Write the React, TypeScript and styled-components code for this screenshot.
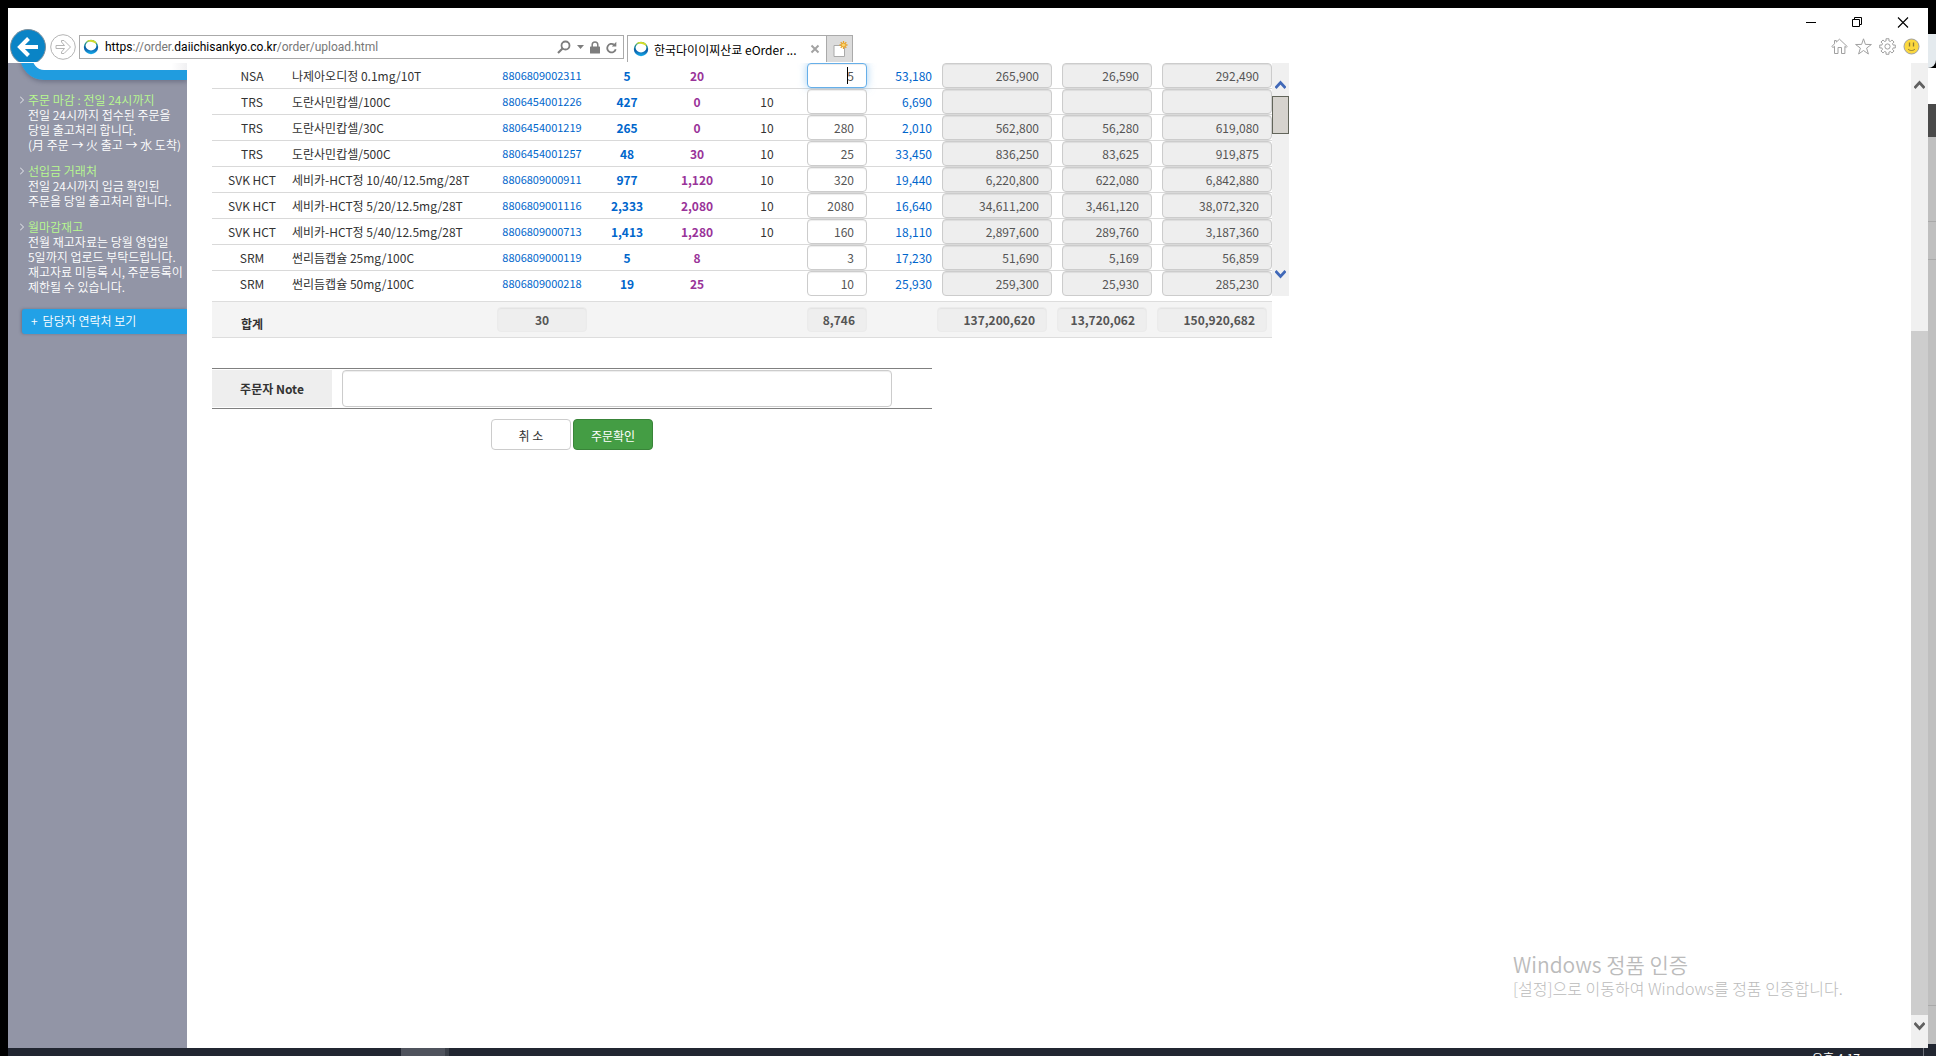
import React from "react";
import styled, { createGlobalStyle, css } from "styled-components";

const GlobalStyle = createGlobalStyle`
  *, *::before, *::after { box-sizing: border-box; }
  html, body, #root { height: 100%; }
  body {
    margin: 0;
    background: #000;
    color: #333;
    font-family: "Noto Sans CJK KR", "Noto Sans", sans-serif;
    font-size: 12px;
    overflow: hidden;
  }
  button, input { font: inherit; color: inherit; }
  button { padding: 0; border: 0; background: none; }
  svg { display: block; }
`;

/* ---------- desktop ---------- */

const Desktop = styled.div`
  height: 100vh;
  display: grid;
  grid-template-columns: 8px minmax(0, 1fr) 8px;
  grid-template-rows: 8px minmax(0, 1fr) 8px;
  background: #000;
`;

const Behind = styled.div`
  grid-column: 3;
  grid-row: 2 / 4;
  display: flex;
  flex-direction: column;
`;

const Slice = styled.div<{ $h?: number; $bg: string; $round?: boolean }>`
  ${(p) => (p.$h ? `flex: none; height: ${p.$h}px;` : "flex: 1;")}
  background: ${(p) => p.$bg};
  border-bottom-right-radius: ${(p) => (p.$round ? 8 : 0)}px;
`;

const Taskbar = styled.footer`
  grid-column: 2;
  grid-row: 3;
  display: flex;
  justify-content: space-between;
  overflow: hidden;
  background: #212631;
  color: #fff;
`;

const RunningApp = styled.div`
  width: 48px;
  margin-left: 393px;
  background: #4f535d;
  border-right: 4px solid #3a3f48;
`;

const Clock = styled.div`
  padding: 2px 63px 0 0;
  margin-right: 4px;
  border-right: 1px solid #6d717a;
  font-size: 12px;
  line-height: 16px;
`;

/* ---------- browser window ---------- */

const Window = styled.div`
  grid-column: 2;
  grid-row: 2;
  position: relative;
  display: flex;
  flex-direction: column;
  background: #fff;
`;

const Chrome = styled.header`
  flex: none;
  height: 55px;
  display: flex;
  justify-content: space-between;
`;

const NavGroup = styled.div`
  height: 34px;
  margin-top: 20px;
  padding-left: 2px;
  display: flex;
  align-items: flex-start;
  overflow: hidden;
`;

const BackButton = styled.button`
  margin-top: 1px;
  width: 36px;
  height: 36px;
`;

const ForwardButton = styled.button`
  margin: 6px 3px 0 4px;
  width: 26px;
  height: 26px;
`;

const AddressBar = styled.form`
  width: 545px;
  height: 24px;
  margin-top: 7px;
  padding: 0 6px 0 3px;
  display: flex;
  align-items: center;
  gap: 6px;
  border: 1px solid #aaa;
`;

const Url = styled.div`
  flex: 1;
  font-family: Roboto, "Noto Sans CJK KR", sans-serif;
  font-size: 12px;
  line-height: 20px;
  color: #777;
  white-space: nowrap;
  b { font-weight: 400; color: #000; }
`;

const TabStrip = styled.div`
  display: flex;
  height: 27px;
  margin: 7px 0 0 3px;
`;

const Tab = styled.div`
  width: 199px;
  padding: 0 4px 0 5px;
  display: flex;
  align-items: center;
  gap: 5px;
  border: solid #aaa;
  border-width: 1px 0 0 1px;
  font-size: 12px;
  color: #000;
  white-space: nowrap;
  span { flex: 1; }
`;

const NewTab = styled.button`
  width: 27px;
  display: grid;
  place-items: center;
  background: #dcdcdc;
  border: solid #aaa;
  border-width: 1px 1px 0 1px;
`;

const RightTools = styled.div`
  display: flex;
  flex-direction: column;
  align-items: flex-end;
`;

const ControlRow = styled.div`
  display: flex;
  align-items: flex-start;
  gap: 30px;
  padding: 6px 17px 0 0;
  height: 30px;
`;

const ToolRow = styled.div`
  display: flex;
  gap: 7px;
  padding-right: 8px;
`;

const Body = styled.div`
  flex: 1;
  min-height: 0;
  display: flex;
  overflow: hidden;
`;

const PageScroll = styled.div`
  flex: none;
  width: 17px;
  display: flex;
  flex-direction: column;
  align-items: center;
  background: #f0f0f0;
`;

const PageTrack = styled.div`
  flex: 1;
  width: 100%;
  display: flex;
  flex-direction: column;
  justify-content: flex-end;
`;

const PageThumb = styled.div`
  height: 74%;
  background: #cdcdcd;
`;

const ScrollButton = styled.button<{ $h: number; $drop: number }>`
  flex: none;
  display: flex;
  align-items: flex-start;
  justify-content: center;
  width: 17px;
  height: ${(p) => p.$h}px;
  padding-top: ${(p) => p.$drop}px;
`;

/* ---------- sidebar ---------- */

const Sidebar = styled.aside`
  flex: none;
  width: 179px;
  overflow: hidden;
  background: #9295a6;
  color: #fff;
`;

const PanelEdge = styled.div`
  height: 40px;
  margin: -23px 0 0 12px;
  border: solid #209cdf;
  border-width: 0 0 10px 12px;
  border-bottom-left-radius: 24px;
  background: linear-gradient(90deg, #fff 90%, #f0f0f2);
  box-shadow: 0 2px 4px rgba(60, 66, 90, 0.4);
`;

const Notices = styled.div`
  padding: 12px 0 0 12px;
  display: flex;
  flex-direction: column;
  gap: 11px;
`;

const Notice = styled.section`
  display: grid;
  grid-template-columns: 8px 1fr;
  align-items: center;
  line-height: 15px;
  white-space: nowrap;
  h2 {
    margin: 0;
    font-size: 12px;
    font-weight: 350;
    color: #b9fb8f;
  }
  p {
    grid-column: 2;
    margin: 0;
    font-weight: 350;
  }
`;

const ContactLink = styled.a`
  display: block;
  margin: 15px 0 0 14px;
  padding-left: 9px;
  height: 25px;
  line-height: 24px;
  border-radius: 3px 0 0 3px;
  background: #22a1e6;
  box-shadow: -1px 0 3px rgba(60, 66, 90, 0.4);
  color: #fff;
  font-weight: 350;
  text-decoration: none;
  span { margin-right: 5px; }
`;

/* ---------- order form ---------- */

const Main = styled.main`
  flex: 1;
  min-width: 0;
  padding-left: 25px;
`;

const Lines = styled.div`
  display: flex;
`;

const OrderTable = styled.table`
  width: 1060px;
  table-layout: fixed;
  border-collapse: separate;
  border-spacing: 0;
  td, th { padding: 0; }
`;

const Row = styled.tr`
  td { height: 26px; border-bottom: 1px solid #d9d9d9; line-height: 25px; }
  &:last-child td { height: 25px; border-bottom: 0; }
`;

type CellKind = "center" | "name" | "code" | "stock" | "avg" | "price" | "field" | "sum";

const kinds: Record<CellKind, ReturnType<typeof css>> = {
  center: css`text-align: center;`,
  name: css`text-align: left; white-space: nowrap;`,
  code: css`text-align: center; color: #0066cc; font-size: 11px;`,
  stock: css`text-align: center; color: #0066cc; font-weight: 700;`,
  avg: css`text-align: center; color: #993399; font-weight: 700;`,
  price: css`text-align: right; color: #0066cc;`,
  field: css`position: relative;`,
  sum: css``,
};

const Cell = styled.td<{ $kind: CellKind }>`
  ${(p) => kinds[p.$kind]}
  &&& { padding: ${(p) => (p.$kind === "sum" ? "0 0 0 10px" : p.$kind === "field" ? "0 5px" : "0")}; }
`;

const Field = styled.input<{ $active?: boolean }>`
  display: block;
  width: 100%;
  height: 25px;
  padding: 0 12px;
  text-align: right;
  color: #555;
  background: #fff;
  border: 1px solid ${(p) => (p.$active ? "#66afe9" : "#ccc")};
  border-radius: 4px;
  box-shadow: inset 0 1px 1px rgba(0, 0, 0, 0.075)
    ${(p) => (p.$active ? ", 0 0 8px rgba(102, 175, 233, 0.6)" : "")};
  &:read-only { background: #eee; }
`;

const Caret = styled.span`
  position: absolute;
  top: 4px;
  right: 24px;
  width: 1px;
  height: 17px;
  background: #000;
`;

const ListScroll = styled.div`
  width: 17px;
  display: flex;
  flex-direction: column;
  background: #f0f0f0;
`;

const ListThumb = styled.div`
  height: 38px;
  margin-bottom: auto;
  background: #d6d3ce;
  border: 1px solid #62655a;
`;

const TotalTable = styled(OrderTable)`
  margin-top: 5px;
  background: #f4f4f4;
  border: solid #ddd;
  border-width: 1px 0;
  td, th { height: 35px; padding: 0 5px; }
  th { padding-top: 8px; font-weight: 700; text-align: center; }
`;

const Total = styled.output<{ $center?: boolean }>`
  display: block;
  height: 25px;
  margin-bottom: 1px;
  padding: 0 11px;
  line-height: 24px;
  border: 1px solid #ebebeb;
  border-radius: 4px;
  background: #eee;
  box-shadow: inset 0 1px 1px rgba(0, 0, 0, 0.05);
  color: #555;
  font-weight: 700;
  text-align: ${(p) => (p.$center ? "center" : "right")};
`;

const OrderForm = styled.form`
  width: 720px;
  margin-top: 30px;
`;

const NoteRow = styled.div`
  display: flex;
  gap: 10px;
  padding: 1px 0;
  border: solid #808080;
  border-width: 1px 0;
  label {
    width: 120px;
    line-height: 37px;
    background: #eee;
    text-align: center;
    font-weight: 700;
  }
  input {
    width: 550px;
    height: 37px;
    padding: 0 12px;
    border: 1px solid #ccc;
    border-radius: 4px;
    box-shadow: inset 0 1px 1px rgba(0, 0, 0, 0.075);
  }
`;

const Actions = styled.div`
  display: flex;
  justify-content: center;
  gap: 2px;
  margin-top: 10px;
`;

const Action = styled.button<{ $primary?: boolean }>`
  width: 80px;
  height: 31px;
  padding-top: 1px;
  border: 1px solid ${(p) => (p.$primary ? "#398439" : "#ccc")};
  border-radius: 4px;
  background: ${(p) => (p.$primary ? "#449d44" : "#fff")};
  color: ${(p) => (p.$primary ? "#fff" : "#333")};
`;

const Activation = styled.div`
  position: absolute;
  right: 80px;
  bottom: 49px;
  width: 335px;
  color: #bbb;
  font-weight: 300;
  white-space: nowrap;
  strong { display: block; font-size: 21px; font-weight: 350; line-height: 26px; }
  span { display: block; font-size: 16px; line-height: 22px; }
`;

/* ---------- icons ---------- */

const SiteIcon = () => (
  <svg width="16" height="16" viewBox="0 0 16 16">
    <defs>
      <linearGradient id="ring" x1="0" y1="0" x2="0" y2="1">
        <stop offset="0" stopColor="#5fb84a" />
        <stop offset="0.35" stopColor="#0b7f9c" />
        <stop offset="0.6" stopColor="#0a5ca8" />
        <stop offset="1" stopColor="#17b0ee" />
      </linearGradient>
    </defs>
    <circle cx="8" cy="8" r="7.2" fill="url(#ring)" />
    <ellipse cx="8" cy="6.800" rx="5.4" ry="4.6" fill="#fff" />
    <path d="M3.500 2.400C6 .4 10.500 .4 13 2.900L13.400 5C10 2.600 7 2.300 3.500 2.400Z" fill="#d3dc2a" />
  </svg>
);

const BackIcon = () => (
  <svg width="36" height="36" viewBox="0 0 36 36">
    <circle cx="18" cy="18" r="17.500" fill="#0a84c6" stroke="#7c8f9c" />
    <path d="M28 18H10.500M18.500 9.500L10 18l8.500 8.500" fill="none" stroke="#fff" strokeWidth="4" />
  </svg>
);

const ForwardIcon = () => (
  <svg width="26" height="26" viewBox="0 0 26 26" fill="none" stroke="#b4b4b4">
    <circle cx="13" cy="13" r="12.300" />
    <path d="M6 11.500h8.500L11.500 8V6.500h2.500L20.500 13 14 19.500h-2.500V18l3-3.500H6z" />
  </svg>
);

const SearchIcon = () => (
  <svg width="14" height="14" viewBox="0 0 14 14" fill="none" stroke="#7d7d7d">
    <circle cx="8.500" cy="5.500" r="4" strokeWidth="1.800" />
    <path d="M5.500 8.500L1 13" strokeWidth="2.200" />
  </svg>
);

const DropIcon = () => (
  <svg width="7" height="4" viewBox="0 0 7 4"><path d="M0 0h7L3.500 4z" fill="#7d7d7d" /></svg>
);

const LockIcon = () => (
  <svg width="10" height="13" viewBox="0 0 10 13">
    <path d="M2.200 6V3.800a2.800 2.800 0 0 1 5.600 0V6" fill="none" stroke="#7d7d7d" strokeWidth="1.500" />
    <rect y="5.500" width="10" height="7" rx="0.600" fill="#7d7d7d" />
  </svg>
);

const ReloadIcon = () => (
  <svg width="11" height="13" viewBox="0 0 11 13">
    <path d="M9.700 8.300A4.300 4.300 0 1 1 8 3.600" fill="none" stroke="#7d7d7d" strokeWidth="1.800" />
    <path d="M5.800 5.500H10.300V.8z" fill="#7d7d7d" />
  </svg>
);

const CloseTabIcon = () => (
  <svg width="14" height="10" viewBox="0 0 14 10" stroke="#a3a3a3" strokeWidth="2">
    <path d="M3.500 1.500l7 7M10.500 1.500l-7 7" />
  </svg>
);

const NewTabIcon = () => (
  <svg width="16" height="17" viewBox="0 0 16 17">
    <path d="M2 4.500h10.500v11H2z" fill="#fff" stroke="#aaa" />
    <path d="M11.500 0v8M7.500 4h8M8.700 1.200l5.600 5.600M14.300 1.200L8.700 6.800" stroke="#e9a32a" strokeWidth="1.300" />
    <circle cx="11.500" cy="4" r="1.600" fill="#fcd66b" />
  </svg>
);

const MinimizeIcon = () => (
  <svg width="16" height="16" viewBox="0 0 16 16"><path d="M3 8.500h10" stroke="#000" /></svg>
);
const RestoreIcon = () => (
  <svg width="16" height="16" viewBox="0 0 16 16" fill="none" stroke="#000">
    <path d="M3.500 5.500h7v7h-7zM5.500 5.500v-2h7v7h-2" />
  </svg>
);
const CloseIcon = () => (
  <svg width="16" height="16" viewBox="0 0 16 16" stroke="#000" strokeWidth="1.100">
    <path d="M3 3.500l10 10M13 3.500l-10 10" />
  </svg>
);

const HomeIcon = () => (
  <svg width="17" height="17" viewBox="0 0 17 17" fill="none" stroke="#a0a0a0">
    <path d="M.8 8.500L3.500 5.800V2.500h1.800v1.600L8.500 1.200l7.700 7.300-1 1-1.300-1.200v7.200H10.500v-6h-3.500v6H3.500V8.300L2 9.500z" />
  </svg>
);
const StarIcon = () => (
  <svg width="17" height="17" viewBox="0 0 17 17" fill="none" stroke="#a0a0a0">
    <path d="M8.500 .8l1.900 5.600 6 .1-4.800 3.600 1.800 5.900-4.900-3.500-4.900 3.500 1.800-5.900L.6 6.500l6-.1z" />
  </svg>
);
const GearIcon = () => {
  const teeth = Array.from({ length: 8 }, (_, i) => {
    const at = (r: number, d: number) => {
      const a = ((i * 45 + d) * Math.PI) / 180;
      return `${(8.5 + r * Math.cos(a)).toFixed(2)} ${(8.5 + r * Math.sin(a)).toFixed(2)}`;
    };
    return `${at(5.8, -14)}L${at(7.9, -11)}L${at(7.9, 11)}L${at(5.8, 14)}`;
  });
  return (
    <svg width="17" height="17" viewBox="0 0 17 17" fill="none" stroke="#a0a0a0">
      <path d={`M${teeth.join("L")}Z`} />
      <circle cx="8.500" cy="8.500" r="2.600" />
    </svg>
  );
};
const SmileIcon = () => (
  <svg width="17" height="17" viewBox="0 0 17 17">
    <circle cx="8.500" cy="8.500" r="7.500" fill="#fbd83f" stroke="#a0a0a0" />
    <path d="M6.500 4.500v4M10.500 4.500v4" stroke="#8a7836" strokeWidth="1.300" />
    <path d="M5 11c1.800 2 5.200 2 7 0" fill="none" stroke="#8a7836" />
  </svg>
);

const Chevron = ({ down, color }: { down?: boolean; color: string }) => (
  <svg width="11" height="9" viewBox="0 0 11 9" fill="none" stroke={color} strokeWidth="2.800">
    <path d={down ? "M.5 1l5 5.500 5-5.500" : "M.5 8l5-5.500 5 5.500"} />
  </svg>
);

const Bullet = () => (
  <svg width="4" height="8" viewBox="0 0 4 8" fill="none" stroke="#e8e9ee">
    <path d="M0 .5l3.500 3.500L0 7.500" />
  </svg>
);

/* ---------- data ---------- */

type Line = [string, string, string, string, string, string, string, string, string, string, string];

const lines: Line[] = [
  ["NSA", "나제아오디정 0.1mg/10T", "8806809002311", "5", "20", "", "5", "53,180", "265,900", "26,590", "292,490"],
  ["TRS", "도란사민캅셀/100C", "8806454001226", "427", "0", "10", "", "6,690", "", "", ""],
  ["TRS", "도란사민캅셀/30C", "8806454001219", "265", "0", "10", "280", "2,010", "562,800", "56,280", "619,080"],
  ["TRS", "도란사민캅셀/500C", "8806454001257", "48", "30", "10", "25", "33,450", "836,250", "83,625", "919,875"],
  ["SVK HCT", "세비카-HCT정 10/40/12.5mg/28T", "8806809000911", "977", "1,120", "10", "320", "19,440", "6,220,800", "622,080", "6,842,880"],
  ["SVK HCT", "세비카-HCT정 5/20/12.5mg/28T", "8806809001116", "2,333", "2,080", "10", "2080", "16,640", "34,611,200", "3,461,120", "38,072,320"],
  ["SVK HCT", "세비카-HCT정 5/40/12.5mg/28T", "8806809000713", "1,413", "1,280", "10", "160", "18,110", "2,897,600", "289,760", "3,187,360"],
  ["SRM", "썬리듬캡슐 25mg/100C", "8806809000119", "5", "8", "", "3", "17,230", "51,690", "5,169", "56,859"],
  ["SRM", "썬리듬캡슐 50mg/100C", "8806809000218", "19", "25", "", "10", "25,930", "259,300", "25,930", "285,230"],
];

const cellKinds: CellKind[] = [
  "center", "name", "code", "stock", "avg", "center", "field", "price", "sum", "sum", "sum",
];

const notices = [
  { title: "주문 마감 : 전일 24시까지", body: ["전일 24시까지 접수된 주문을", "당일 출고처리 합니다.", "(月 주문 → 火 출고 → 水 도착)"] },
  { title: "선입금 거래처", body: ["전일 24시까지 입금 확인된", "주문을 당일 출고처리 합니다."] },
  { title: "월마감재고", body: ["전월 재고자료는 당월 영업일", "5일까지 업로드 부탁드립니다.", "재고자료 미등록 시, 주문등록이", "제한될 수 있습니다."] },
];

const Columns = () => (
  <colgroup>
    {[80, 200, 100, 70, 70, 70, 70, 60, 120, 100, 120].map((w, i) => (
      <col key={i} width={w} />
    ))}
  </colgroup>
);

const LineRow = ({ line, active }: { line: Line; active: boolean }) => (
  <Row>
    {line.map((value, i) => {
      const kind = cellKinds[i];
      return (
        <Cell key={i} $kind={kind}>
          {kind === "field" ? (
            <>
              <Field aria-label={line[1]} defaultValue={value} $active={active} />
              {active && <Caret />}
            </>
          ) : kind === "sum" ? (
            <Field aria-label={line[1]} defaultValue={value} readOnly />
          ) : (
            value
          )}
        </Cell>
      );
    })}
  </Row>
);

export default function App() {
  return (
    <Desktop>
      <GlobalStyle />
      <Window>
        <Chrome>
          <NavGroup>
            <BackButton aria-label="뒤로"><BackIcon /></BackButton>
            <ForwardButton aria-label="앞으로"><ForwardIcon /></ForwardButton>
            <AddressBar>
              <SiteIcon />
              <Url><b>https</b>://order.<b>daiichisankyo.co.kr</b>/order/upload.html</Url>
              <SearchIcon />
              <DropIcon />
              <LockIcon />
              <ReloadIcon />
            </AddressBar>
            <TabStrip>
              <Tab>
                <SiteIcon />
                <span>한국다이이찌산쿄 eOrder ...</span>
                <button aria-label="탭 닫기"><CloseTabIcon /></button>
              </Tab>
              <NewTab aria-label="새 탭"><NewTabIcon /></NewTab>
            </TabStrip>
          </NavGroup>
          <RightTools>
            <ControlRow>
              <button aria-label="최소화"><MinimizeIcon /></button>
              <button aria-label="이전 크기로"><RestoreIcon /></button>
              <button aria-label="닫기"><CloseIcon /></button>
            </ControlRow>
            <ToolRow>
              <button aria-label="홈"><HomeIcon /></button>
              <button aria-label="즐겨찾기"><StarIcon /></button>
              <button aria-label="도구"><GearIcon /></button>
              <button aria-label="의견"><SmileIcon /></button>
            </ToolRow>
          </RightTools>
        </Chrome>

        <Body>
          <Sidebar>
            <PanelEdge />
            <Notices>
              {notices.map((n) => (
                <Notice key={n.title}>
                  <Bullet />
                  <h2>{n.title}</h2>
                  {n.body.map((t) => <p key={t}>{t}</p>)}
                </Notice>
              ))}
            </Notices>
            <ContactLink href="#contacts"><span>+</span>담당자 연락처 보기</ContactLink>
          </Sidebar>

          <Main>
            <Lines>
              <OrderTable>
                <Columns />
                <tbody>
                  {lines.map((line, i) => <LineRow key={line[2]} line={line} active={i === 0} />)}
                </tbody>
              </OrderTable>
              <ListScroll>
                <ScrollButton $h={33} $drop={17} aria-label="위로"><Chevron color="#4169b8" /></ScrollButton>
                <ListThumb />
                <ScrollButton $h={28} $drop={2} aria-label="아래로"><Chevron down color="#4169b8" /></ScrollButton>
              </ListScroll>
            </Lines>

            <TotalTable>
              <Columns />
              <tbody>
                <tr>
                  <th scope="row">합계</th>
                  <td />
                  <td><Total $center>30</Total></td>
                  <td /><td /><td />
                  <td><Total>8,746</Total></td>
                  <td />
                  <td><Total>137,200,620</Total></td>
                  <td><Total>13,720,062</Total></td>
                  <td><Total>150,920,682</Total></td>
                </tr>
              </tbody>
            </TotalTable>

            <OrderForm>
              <NoteRow>
                <label htmlFor="note">주문자 Note</label>
                <input id="note" type="text" />
              </NoteRow>
              <Actions>
                <Action type="button">취 소</Action>
                <Action type="button" $primary>주문확인</Action>
              </Actions>
            </OrderForm>
          </Main>

          <PageScroll>
            <ScrollButton $h={28} $drop={17} aria-label="페이지 위로"><Chevron color="#606060" /></ScrollButton>
            <PageTrack><PageThumb /></PageTrack>
            <ScrollButton $h={33} $drop={7} aria-label="페이지 아래로"><Chevron down color="#606060" /></ScrollButton>
          </PageScroll>
        </Body>

        <Activation>
          <strong>Windows 정품 인증</strong>
          <span>[설정]으로 이동하여 Windows를 정품 인증합니다.</span>
        </Activation>
      </Window>

      <Behind>
        <Slice $h={26} $bg="#000" />
        <Slice $h={34} $bg="#e4eaee" $round />
        <Slice $h={36} $bg="#fff" />
        <Slice $h={33} $bg="#4a4a4a" />
        <Slice $h={84} $bg="#bfbfbf" />
        <Slice $h={1} $bg="#a9a9a9" />
        <Slice $h={37} $bg="#bfbfbf" />
        <Slice $h={1} $bg="#a9a9a9" />
        <Slice $bg="#bfbfbf" />
        <Slice $h={1} $bg="#a9a9a9" />
        <Slice $h={38} $bg="#bfbfbf" />
        <Slice $h={12} $bg="#212631" />
      </Behind>

      <Taskbar>
        <RunningApp />
        <Clock>오후 4:17</Clock>
      </Taskbar>
    </Desktop>
  );
}
